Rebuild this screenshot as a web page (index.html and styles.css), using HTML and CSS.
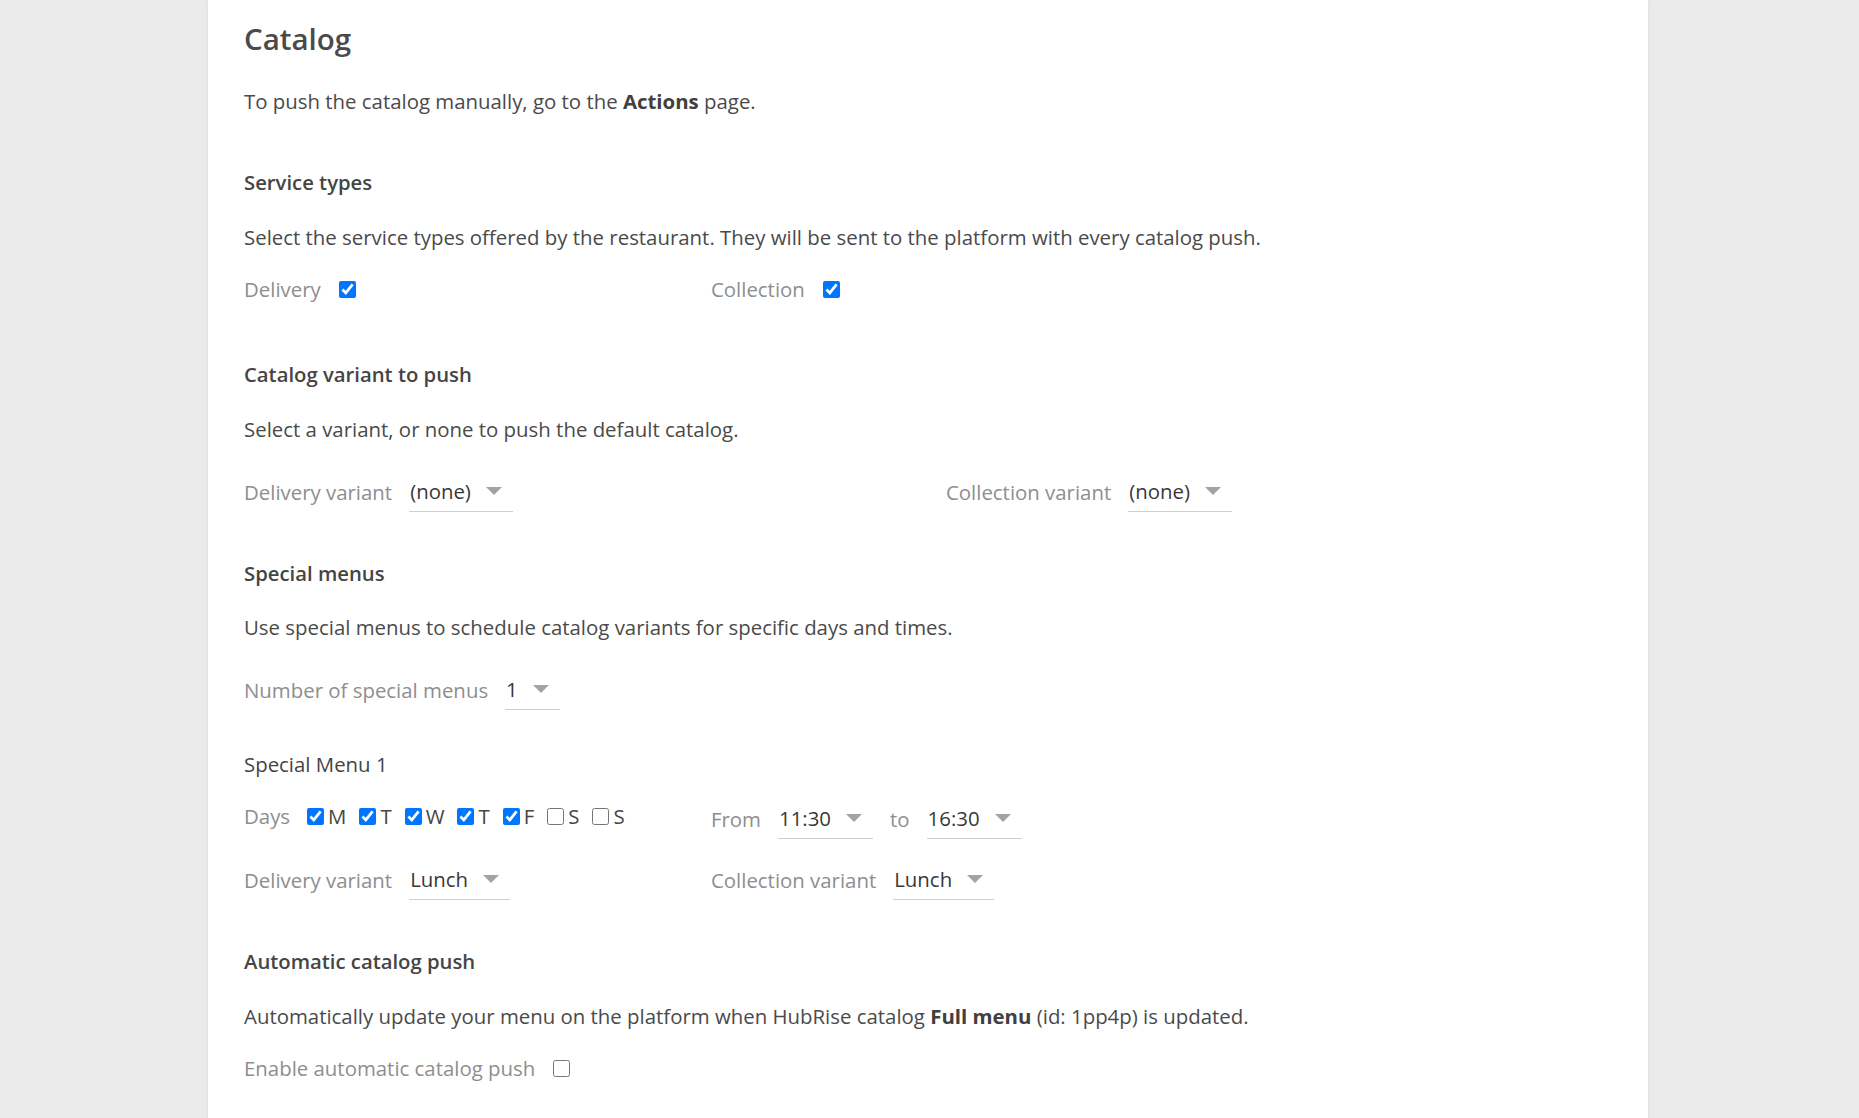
FILE: index.html
```html
<!DOCTYPE html>
<html lang="en">
<head>
  <meta charset="UTF-8" />
  <meta name="viewport" content="width=device-width, initial-scale=1.0"/>
  <title>Catalog</title>
  <link rel="stylesheet" href="styles.css">
</head>
<body>
  <div class="card">
    <h1>Catalog</h1>
    <p class="intro">To push the catalog manually, go to the <strong>Actions</strong> page.</p>

    <div class="section first">
      <h3>Service types</h3>
      <p>Select the service types offered by the restaurant. They will be sent to the platform with every catalog push.</p>
      <div class="row check-row cols-narrow">
        <label class="field"><span class="label">Delivery</span><input type="checkbox" checked></label>
        <label class="field"><span class="label">Collection</span><input type="checkbox" checked></label>
      </div>
    </div>

    <div class="section after-checks">
      <h3>Catalog variant to push</h3>
      <p>Select a variant, or none to push the default catalog.</p>
      <div class="row select-row cols-wide">
        <div class="field">
          <span class="label">Delivery variant</span>
          <div class="select"><span>(none)</span><span class="caret"></span></div>
        </div>
        <div class="field">
          <span class="label">Collection variant</span>
          <div class="select"><span>(none)</span><span class="caret"></span></div>
        </div>
      </div>
    </div>

    <div class="section">
      <h3>Special menus</h3>
      <p class="tight">Use special menus to schedule catalog variants for specific days and times.</p>
      <div class="row select-row">
        <div class="field">
          <span class="label">Number of special menus</span>
          <div class="select"><span>1</span><span class="caret"></span></div>
        </div>
      </div>

      <div class="menu-title">Special Menu 1</div>
      <div class="row days-row cols-narrow">
        <div class="field days-field">
          <span class="label">Days</span>
          <div class="days">
            <label class="day"><input type="checkbox" checked>M</label>
            <label class="day"><input type="checkbox" checked>T</label>
            <label class="day"><input type="checkbox" checked>W</label>
            <label class="day"><input type="checkbox" checked>T</label>
            <label class="day"><input type="checkbox" checked>F</label>
            <label class="day"><input type="checkbox">S</label>
            <label class="day"><input type="checkbox">S</label>
          </div>
        </div>
        <div class="field">
          <span class="label">From</span>
          <div class="select"><span>11:30</span><span class="caret"></span></div>
          <span class="label">to</span>
          <div class="select"><span>16:30</span><span class="caret"></span></div>
        </div>
      </div>
      <div class="row variant-row cols-narrow">
        <div class="field">
          <span class="label">Delivery variant</span>
          <div class="select"><span>Lunch</span><span class="caret"></span></div>
        </div>
        <div class="field">
          <span class="label">Collection variant</span>
          <div class="select"><span>Lunch</span><span class="caret"></span></div>
        </div>
      </div>
    </div>

    <div class="section">
      <h3>Automatic catalog push</h3>
      <p>Automatically update your menu on the platform when HubRise catalog <strong>Full menu</strong> (id: 1pp4p) is updated.</p>
      <div class="row check-row">
        <label class="field"><span class="label">Enable automatic catalog push</span><input type="checkbox"></label>
      </div>
    </div>
  </div>
</body>
</html>
```

FILE: styles.css
```css
body {
  margin: 0;
  background: #ebebeb;
  font-family: "Open Sans", "Noto Sans", sans-serif;
  font-size: 20.4px;
  color: #4a4a4a;
}
.card {
  box-sizing: border-box;
  width: 1440px;
  min-height: 100vh;
  margin-left: 208px;
  padding: 21px 36px 40px;
  background: #fff;
  box-shadow: 0 0 3px rgba(0,0,0,0.08);
}
h1 {
  margin: 0;
  font-size: 29.5px;
  line-height: 36px;
  font-weight: 600;
  color: #4a4a4a;
}
h3 {
  margin: 0;
  font-size: 20.3px;
  line-height: 30px;
  font-weight: 600;
  color: #454545;
}
p {
  margin: 25px 0 0;
  line-height: 30px;
}
p.tight {
  margin-top: 24px;
}
strong {
  font-weight: 700;
  color: #404040;
}
.intro {
  margin-top: 29px;
}
.section {
  margin-top: 46px;
}
.section.first {
  margin-top: 51px;
}
.section.after-checks {
  margin-top: 55px;
}
.row {
  display: grid;
  grid-template-columns: auto;
  justify-content: start;
  align-items: center;
}
.cols-narrow {
  grid-template-columns: 467px auto;
}
.cols-wide {
  grid-template-columns: 702px auto;
}
.check-row {
  margin-top: 22px;
  height: 30px;
}
.select-row {
  margin-top: 27px;
  height: 41px;
}
.field {
  display: flex;
  align-items: center;
  gap: 17px;
}
.label {
  color: #8e8e8e;
  line-height: 30px;
}
input[type="checkbox"] {
  width: 17px;
  height: 17px;
  margin: 0;
}
.check-row .field {
  gap: 18px;
}
.select {
  box-sizing: border-box;
  display: inline-flex;
  align-items: center;
  gap: 15px;
  height: 41px;
  padding: 0 11px 0 1px;
  border-bottom: 1px solid #cfcfcf;
  color: #383838;
}
.caret {
  width: 0;
  height: 0;
  border-left: 8px solid transparent;
  border-right: 8px solid transparent;
  border-top: 8px solid #a3a3a3;
}
.menu-title {
  margin-top: 39px;
  line-height: 30px;
  color: #454545;
}
.days-row {
  margin-top: 19px;
  height: 41px;
}
.days-field {
  margin-bottom: 5px;
}
.variant-row {
  margin-top: 20px;
  height: 41px;
}
.days {
  display: flex;
  align-items: center;
}
.day {
  display: flex;
  align-items: center;
  gap: 4px;
  margin-right: 13px;
  color: #454545;
}
```
